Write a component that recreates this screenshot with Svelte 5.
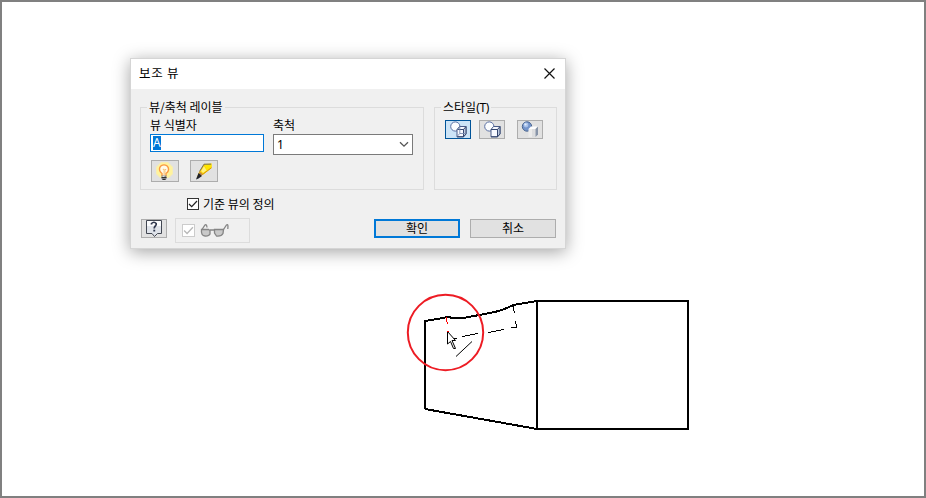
<script>
  let identifier = "A";
  let scale = "1";
  let selectedStyle = "hidden";

  const styles = ["hidden", "visible", "shaded"];
</script>

<main class="canvas">
  <svg class="drawing" width="926" height="498" viewBox="0 0 926 498">
    <g class="outline">
      <path d="M425 409V321L443 318L447 317L454 318H463L482 314.5L499 311L507 308L514 304.8L537 301H688V429H537L425 409" />
      <path d="M537 301V429" />
    </g>
    <g class="hidden-lines">
      <path d="M513.5 306V309L514.5 313M515.5 321L516.5 327.5H511M504 329.5L488 332.5M478 333.5L462 336.5" />
      <path d="M453 338.5H457" />
      <path class="red" d="M446.5 317V320L447.5 324" />
    </g>
    <path class="section" d="M456 356.5L472 341.5" />
    <circle cx="445.5" cy="332.5" r="37.7" />
    <path class="cursor" d="M447.5 331.5V344L450.5 341.5L453.5 348.5H455.5L452 340.5H455.5Z" />
    <path class="hot" d="M447 331h2v1h-2z" />
  </svg>

  <section class="dialog">
    <header>
      <span>보조 뷰</span>
      <svg width="11" height="11" viewBox="0 0 11 11">
        <path d="M.5 .5L10.5 10.5M10.5 .5L.5 10.5" fill="none" stroke="#111" stroke-width="1.2" />
      </svg>
    </header>

    <div class="groups">
      <fieldset class="label-group">
        <legend>뷰/축척 레이블</legend>
        <div class="fields">
          <div class="field name-field">
            <span>뷰 식별자</span>
            <div class="input"><mark>{identifier}</mark></div>
          </div>
          <div class="field scale-field">
            <span>축척</span>
            <div class="select">
              <span>{scale}</span>
              <svg width="10" height="7" viewBox="0 0 10 7">
                <path d="M1 1.2L5 5.2L9 1.2" fill="none" stroke="#555" stroke-width="1.3" />
              </svg>
            </div>
          </div>
        </div>
        <div class="tools">
          <button aria-label="레이블">
            <svg width="20" height="20" viewBox="0 0 20 20">
              <path d="M6 1H13L18 6V13L14 17H5L1 13V6Z" fill="#f8edb0" />
              <path d="M6.5 2H12.5L17 6.5V12.5L13.5 16H5.5L2 12.5V6.5Z" fill="#fff39c" />
              <path d="M7 15V12.5C4.6 10.5 4 8.5 4.8 6.5C6.3 3 11.7 3 13.2 6.5C14.1 9 13.2 11 11 12.5V15" fill="#fffbe8" stroke="#fb9a42" stroke-width="1.4" />
              <path d="M9 14V9.5L8 8L10 9L11 8L10 9.5V14" fill="none" stroke="#f8bd70" stroke-width=".8" />
              <path d="M6.5 14.5H11.5V18L10 19H8L6.5 18Z" fill="#85858a" />
              <path d="M6.5 16.5H11.5M7.5 18.5H10.5" stroke="#333" />
              <path d="M7.5 15.5H9.5" stroke="#ddd" />
            </svg>
          </button>
          <button aria-label="편집">
            <svg width="20" height="20" viewBox="0 0 20 20">
              <path d="M3 16L5 11L10 3L17.5 2.5V7L8.5 14Z" fill="#f7c800" />
              <path d="M10.5 3.5L17.5 2.5V6L12 10Z" fill="#ffe600" />
              <path d="M7 10L10 5L12.5 9.5L9 12Z" fill="#fff27c" />
              <path d="M5.5 10.5L10 3.2H17" fill="none" stroke="#77745c" />
              <path d="M8.5 13.5L17.5 6.8" stroke="#dda000" />
              <path d="M5.5 10.5L9 13.5L5 16Z" fill="#bd8650" />
              <path d="M2 18.5L4.5 12L8 15L4.5 17.5Z" fill="#20222a" />
            </svg>
          </button>
        </div>
      </fieldset>

      <fieldset class="style-group">
        <legend>스타일<span class="key">(T)</span></legend>
        <div class="style-buttons">
          {#each styles as style}
            <button class={style} class:selected={style === selectedStyle} aria-label={style}>
              <svg width="18" height="17" viewBox="0 0 18 17">
                {#if style === "shaded"}
                  <circle cx="6" cy="5.5" r="4.7" fill="#7595cb" stroke="#49658f" />
                  <circle cx="5" cy="4" r="2.4" fill="#a9c2ea" />
                  <circle cx="4.5" cy="3.5" r="1.1" fill="#e4eefc" />
                  <path d="M7.5 8L10 5.5H17L14.5 8Z" fill="#fff" />
                  <path d="M7.5 8H14.5V16H7.5Z" fill="#ececec" />
                  <path d="M11 8H14.5V16H11Z" fill="#dcdddf" />
                  <path d="M14.5 8L17 5.5V13.5L14.5 16Z" fill="#8794a8" />
                {:else}
                  <circle cx="6.3" cy="5.5" r="4.6" fill="#fbfdff" stroke="#596fa3" />
                  <path d="M8 8.5L10.5 5.5H17V13L14.5 15.8H8Z" fill="#f7f9ff" stroke="#4a5c88" />
                  <path d="M14.5 8.5L17 5.5V13L14.5 15.8Z" fill="#bdc9df" stroke="#35476f" />
                  <path d="M8 8.5H14.5V15.8H8" fill="none" stroke="#35476f" />
                {/if}
                {#if style === "hidden"}
                  <path d="M10.8 6V12.5H16.5M10.8 12.5L8 15.5M8 8.5Q10 8.5 10.8 5.5" fill="none" stroke="#7a8cb0" stroke-width=".9" />
                {/if}
              </svg>
            </button>
          {/each}
        </div>
      </fieldset>
    </div>

    <div class="definition">
      <span class="check">
        <svg width="10" height="10" viewBox="0 0 10 10"><path d="M1 5L3.7 7.7L9 2" /></svg>
      </span>
      <span>기준 뷰의 정의</span>
    </div>

    <footer>
      <button class="help" aria-label="도움말">
        <svg width="18" height="17" viewBox="0 0 18 17">
          <path d="M1.5 .5H16.5V13.5H12.5L9.5 16.5L7 13.5H1.5Z" fill="#dfe3ea" stroke="#424752" />
          <path d="M2 1H16V6H2Z" fill="#fafbfd" />
          <path d="M6.5 4.5V3.5Q9 1 11.2 3.5C12 5.5 9.2 6 9.2 8.5" fill="none" stroke="#30384e" stroke-width="1.7" />
          <path d="M8.3 9.7H10.2V11.5H8.3Z" fill="#30384e" />
        </svg>
      </button>
      <div class="preview">
        <span class="check disabled">
          <svg width="11" height="11" viewBox="0 0 10 10"><path d="M1 5L3.7 7.7L9 2" /></svg>
        </span>
        <svg width="30" height="15" viewBox="0 0 30 15">
          <g fill="#c9c9c9" stroke="#858585" stroke-width="1.3">
            <path d="M1.5 6.5H8.5L10 7.5V11Q9 13.3 5 13Q.8 12.8 1.5 6.5Z" />
            <path d="M14.5 6.5H23.5L23 10.5Q21.5 13.5 16.5 13L14.5 10Z" />
            <path d="M2 6.5L5 2Q6.5 .5 7 4.5M10 7H14.5M23.5 6.5L26.5 2Q28.5 .5 27.8 6" fill="none" />
          </g>
        </svg>
      </div>
      <button class="action ok">확인</button>
      <button class="action">취소</button>
    </footer>
  </section>
</main>

<style>
  :global(body) {
    margin: 0;
  }

  .canvas {
    position: relative;
    box-sizing: border-box;
    width: 926px;
    height: 498px;
    border: 2px solid #808080;
    background: #fff;
    color: #000;
    font: 12px/14px "Noto Sans CJK KR", sans-serif;
    overflow: hidden;
  }

  .canvas * {
    box-sizing: border-box;
  }

  svg {
    display: block;
    flex: none;
  }

  .drawing {
    position: absolute;
    top: -2px;
    left: -2px;
    fill: none;
  }

  .outline {
    stroke: #000;
    stroke-width: 2;
    shape-rendering: crispEdges;
  }

  .hidden-lines {
    stroke: #000;
    shape-rendering: crispEdges;
  }

  .hidden-lines .red {
    stroke: #f00;
  }

  .section {
    stroke: #000;
  }

  .drawing circle {
    stroke: #ed1c24;
    stroke-width: 2;
  }

  .cursor {
    fill: #fff;
    stroke: #000;
  }

  .hot {
    fill: #f00;
  }

  .dialog {
    position: absolute;
    top: 56px;
    left: 128px;
    width: 436px;
    height: 191px;
    border: 1px solid #d5d5d5;
    background: #f0f0f0;
    box-shadow: 0 3px 16px rgba(0, 0, 0, 0.36);
  }

  header {
    display: flex;
    align-items: center;
    justify-content: space-between;
    height: 30px;
    padding: 0 10px 2px 8px;
    background: #fff;
  }

  header span {
    font-size: 12.5px;
    letter-spacing: 0.7px;
  }

  .groups {
    display: flex;
    gap: 10px;
    padding: 10px 0 0 9px;
  }

  fieldset {
    min-width: 0;
    height: 91px;
    margin: 0;
    padding: 0;
    border: 1px solid #dcdcdc;
  }

  legend {
    height: 16px;
    margin-left: 6px;
    padding: 0 2px;
    line-height: 15px;
  }

  .label-group {
    width: 284px;
  }

  .style-group {
    width: 123px;
  }

  .key {
    font-family: "Noto Sans", sans-serif;
    letter-spacing: -0.3px;
  }

  .fields {
    display: flex;
    gap: 9px;
    padding-left: 9px;
  }

  .field > span {
    display: block;
    height: 19px;
    line-height: 20px;
  }

  .name-field {
    width: 114px;
  }

  .scale-field {
    width: 140px;
  }

  .input {
    display: flex;
    align-items: center;
    height: 18px;
    padding-left: 2px;
    border: 1px solid #0078d7;
    background: #fff;
  }

  mark {
    height: 14px;
    background: #0078d7;
    color: #fff;
    font-family: "Noto Sans", sans-serif;
  }

  .select {
    display: flex;
    align-items: center;
    justify-content: space-between;
    height: 21px;
    padding: 0 3px;
    border: 1px solid #7a7a7a;
    background: #fff;
    font-family: "Noto Sans", sans-serif;
  }

  .tools {
    display: flex;
    gap: 11px;
    padding: 5px 0 0 10px;
  }

  button {
    display: flex;
    align-items: center;
    justify-content: center;
    width: 28px;
    height: 22px;
    margin: 0;
    padding: 0;
    border: 1px solid #adadad;
    background: #e1e1e1;
    color: #000;
    font: inherit;
  }

  .style-buttons {
    display: flex;
    padding: 5px 0 0 10px;
  }

  .style-buttons button {
    width: 26px;
    height: 19px;
  }

  .style-buttons .visible {
    margin: 0 12px 0 8px;
  }

  .style-buttons .selected {
    border-color: #005499;
    background: #cce4f7;
  }

  .definition {
    display: flex;
    align-items: center;
    gap: 4px;
    height: 14px;
    margin: 7px 0 0 56px;
  }

  .definition > span:last-child {
    line-height: 12px;
  }

  .check {
    display: block;
    width: 12px;
    height: 12px;
    border: 1px solid #333;
    background: #fff;
  }

  .check path {
    fill: none;
    stroke: #222;
    stroke-width: 1.2;
  }

  .check.disabled {
    width: 13px;
    height: 13px;
    border-color: #ccc;
  }

  .disabled path {
    stroke: #b8b8b8;
  }

  footer {
    display: flex;
    align-items: flex-start;
    padding: 7px 9px 0 10px;
  }

  .help {
    width: 26px;
    height: 19px;
    margin-top: 1px;
  }

  .preview {
    display: flex;
    align-items: center;
    gap: 5px;
    width: 75px;
    height: 25px;
    margin: 0 124px 0 8px;
    padding-left: 6px;
    border: 1px solid #dcdcdc;
  }

  .action {
    width: 86px;
    height: 19px;
    margin-top: 1px;
    padding-bottom: 2px;
    line-height: 13px;
  }

  .ok {
    margin-right: 10px;
    border: 2px solid #0078d7;
  }
</style>
